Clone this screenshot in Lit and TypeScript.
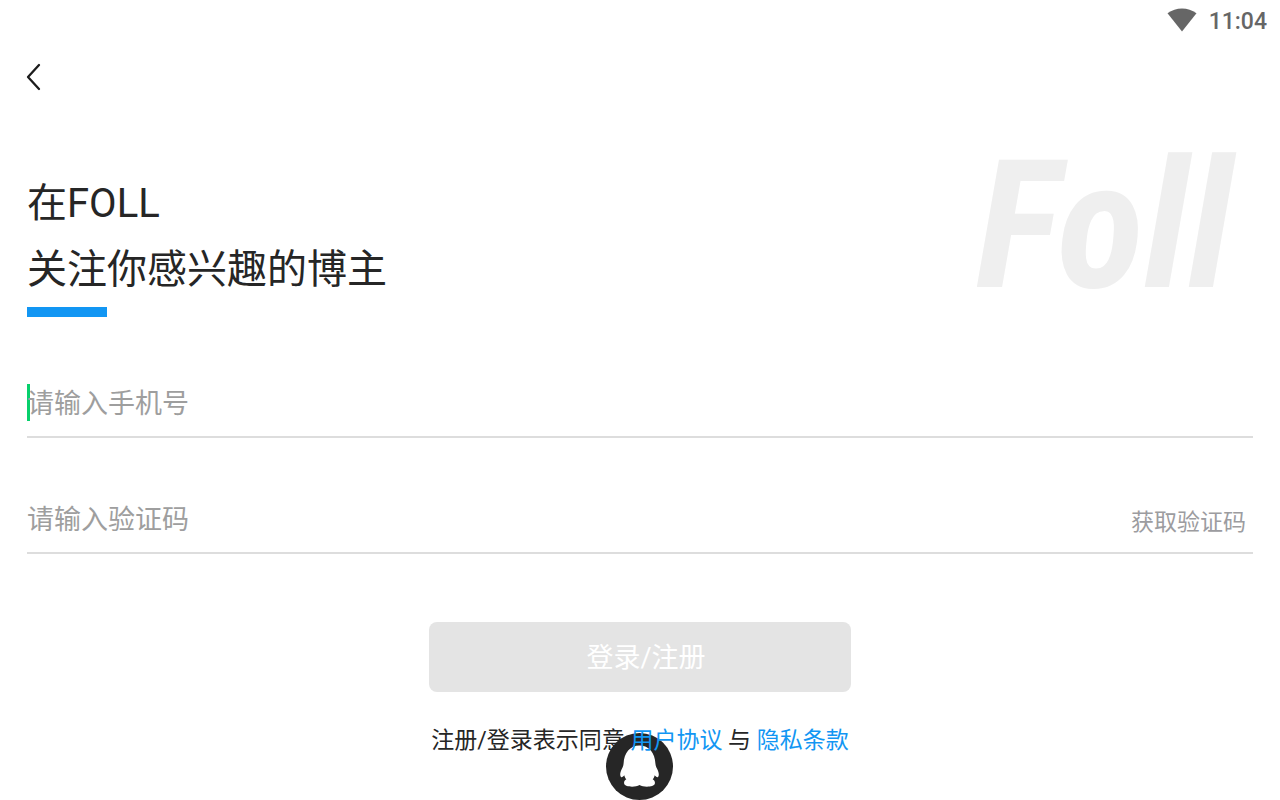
import { LitElement, html, css } from "lit";
import { customElement } from "lit/decorators.js";

@customElement("app-root")
export class AppRoot extends LitElement {
  static styles = css`
    :host {
      display: block;
      font-family: Roboto, "Noto Sans CJK SC", sans-serif;
      color: #262626;
    }
    *, *::before, *::after { box-sizing: border-box; }
    button, input { font: inherit; color: inherit; border: 0; padding: 0; background: none; }
    a { color: #1296f3; text-decoration: none; }
    .page {
      position: relative;
      display: flex;
      flex-direction: column;
      min-height: 100vh;
      overflow: hidden;
      background: #fff;
    }
    .status {
      display: flex;
      justify-content: flex-end;
      align-items: center;
      gap: 12px;
      height: 40px;
      padding-right: 13px;
      color: #666;
      font-size: 23px;
      font-weight: 500;
    }
    .time { padding-top: 2px; }
    .nav { display: flex; height: 74px; padding: 0 20px; align-items: center; }
    .back { display: flex; padding: 4px; }
    .hero {
      display: flex;
      justify-content: space-between;
      align-items: flex-start;
      height: 203px;
      padding: 0 48px 0 27px;
    }
    .title { margin: 0; padding-top: 57px; font-size: 40px; line-height: 66px; font-weight: 400; }
    .title::after { content: ""; display: block; width: 80px; height: 10px; margin-top: 4px; background: #1296f3; }
    .mark {
      padding-top: 12px;
      color: #efefef;
      font-family: "Roboto Condensed", "Liberation Sans Narrow", Lato, sans-serif;
      font-size: 180px;
      line-height: 200px;
      font-weight: 700;
      font-style: italic;
    }
    .form { display: flex; flex-direction: column; padding: 51px 27px 0; }
    .field {
      position: relative;
      display: flex;
      align-items: flex-start;
      height: 70px;
      margin-bottom: 46px;
      border-bottom: 2px solid #ddd;
      font-size: 27px;
      isolation: isolate;
    }
    .input { flex: 1; min-width: 0; height: 70px; padding-top: 2px; outline: none; }
    .input::placeholder { color: #9e9e9e; opacity: 1; }
    .caret { position: absolute; z-index: -1; left: 0; top: 16px; width: 3px; height: 37px; background: #07d06c; }
    .code { height: 70px; padding: 2px 7px 0 0; color: #9c9ca0; font-size: 23px; }
    .submit {
      align-self: center;
      width: 422px;
      max-width: 100%;
      height: 70px;
      margin-top: 22px;
      padding: 0 0 4px 12px;
      border-radius: 8px;
      background: #e4e4e4;
      color: #fff;
      font-size: 27px;
    }
    .agree {
      position: relative;
      z-index: 1;
      margin: 32px 0 0;
      text-align: center;
      font-size: 23px;
      line-height: 34px;
    }
    .qq { position: absolute; left: 50%; bottom: 0; margin-left: -34px; display: flex; }
  `;

  render() {
    return html`
      <main class="page">
        <div class="status">
          <svg width="30" height="24" viewBox="0 0 30 24" aria-hidden="true">
            <path fill="#666" d="M15 23.5 0.5 5.3C4.8 2 9.8.5 15 .5S25.200 2 29.500 5.300Z" />
          </svg>
          <span class="time">11:04</span>
        </div>
        <nav class="nav">
          <button class="back" aria-label="返回">
            <svg width="20" height="28" viewBox="0 0 20 28" fill="none" stroke="#1c1c1c" stroke-width="2.300" stroke-linecap="round" stroke-linejoin="round">
              <path d="M15 2 4 14 15 26" />
            </svg>
          </button>
        </nav>
        <header class="hero">
          <h1 class="title">在FOLL<br />关注你感兴趣的博主</h1>
          <span class="mark">Foll</span>
        </header>
        <form class="form" @submit=${(e: Event) => e.preventDefault()}>
          <div class="field">
            <span class="caret"></span>
            <input class="input" type="tel" aria-label="请输入手机号" placeholder="请输入手机号" />
          </div>
          <div class="field">
            <input class="input" inputmode="numeric" aria-label="请输入验证码" placeholder="请输入验证码" />
            <button class="code" type="button">获取验证码</button>
          </div>
          <button class="submit" type="submit">登录/注册</button>
          <p class="agree">注册/登录表示同意 <a href="#terms">用户协议</a> 与 <a href="#privacy">隐私条款</a></p>
        </form>
        <button class="qq" aria-label="QQ">
          <svg width="67" height="67" viewBox="0 0 67 67">
            <circle cx="33.500" cy="33.500" r="33.500" fill="#262626" />
            <path fill="#fff" d="M33.500 12.500C24 12.500 18 20 17.600 30.500C17.300 33 16.800 34 15.800 36C14 39.500 13.700 42.500 15 44C16 44.600 17.300 43.500 18.300 42.300C18.700 44 19.300 45.200 20.300 46.300C18.500 47.500 17.700 49 18.200 50.800C19 54 29 54.800 33.500 52C38 54.800 48 54 48.800 50.800C49.300 49 48.500 47.500 46.700 46.300C47.700 45.200 48.300 44 48.700 42.300C49.700 43.500 51 44.600 52 44C53.300 42.500 53 39.500 51.200 36C50.200 34 49.700 33 49.400 30.500C49 20 43 12.500 33.500 12.500Z" />
          </svg>
        </button>
      </main>
    `;
  }
}
